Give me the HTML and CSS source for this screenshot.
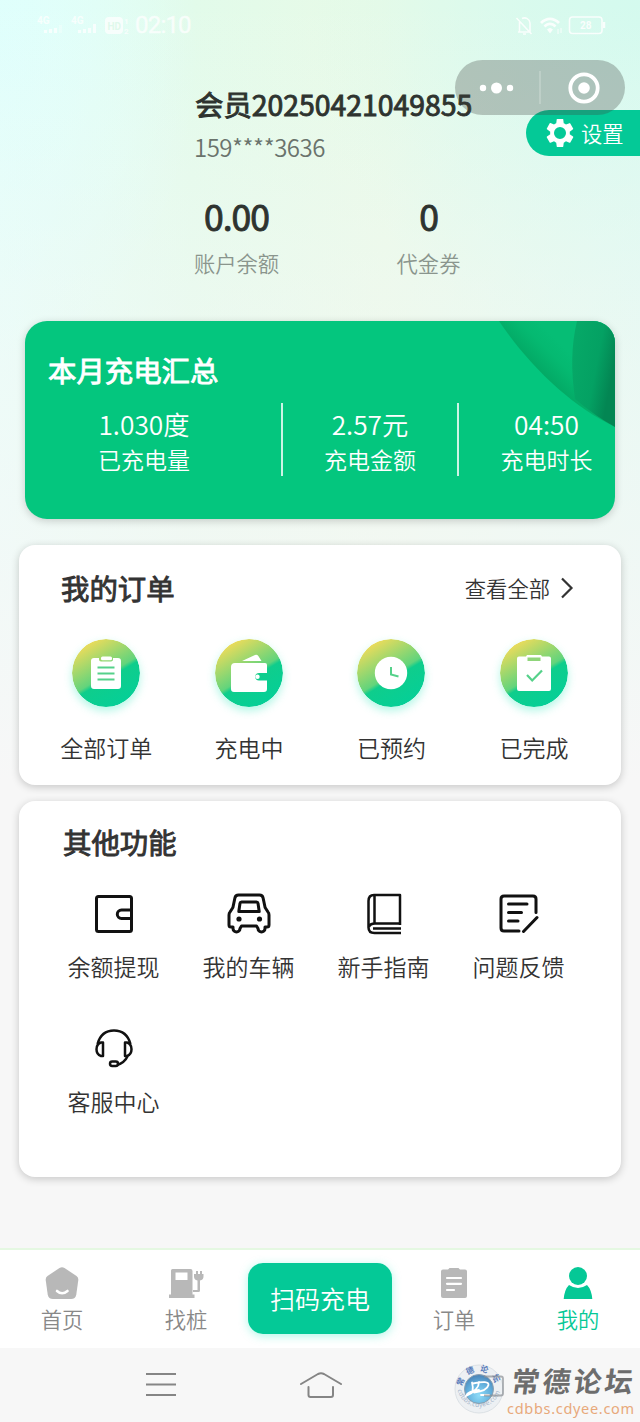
FILE: index.html
```html
<!DOCTYPE html>
<html lang="zh-CN">
<head>
<meta charset="utf-8">
<title>我的</title>
<link rel="stylesheet" href="styles.css">
</head>
<body>
<svg class="defs" width="0" height="0">
  <defs>
    <linearGradient id="ball" x1="0.15" y1="0.08" x2="0.68" y2="0.98">
      <stop offset="0" stop-color="#f3dc59"/>
      <stop offset="0.54" stop-color="#62d47c"/>
      <stop offset="0.6" stop-color="#0fcd8c"/>
      <stop offset="1" stop-color="#05cf97"/>
    </linearGradient>
  </defs>
</svg>
<div class="phone">
  <header class="status">
    <svg class="signals" width="93" height="24" viewBox="0 0 93 24">
      <text class="net" x="0" y="11">4G</text><path d="M7 20v-3h3v3zm5 0v-4h3v4zm5 0v-5h3v5z"/><path d="M22 20v-8h3v8z" opacity=".4"/>
      <text class="net" x="34" y="11">4G</text><path d="M41 20v-3h3v3zm5 0v-4h3v4zm5 0v-5h3v5zm5 0V11h3v9z"/>
      <rect x="68" y="4" width="18" height="17" rx="4"/><text class="hd" x="70.5" y="17">HD</text>
      <text class="sim" x="87" y="11">1</text><text class="sim" x="87" y="21">2</text>
    </svg>
    <span class="clock">02:10</span>
    <svg class="sysicons" width="92" height="24" viewBox="0 0 92 24" fill="none" stroke="#fff" stroke-width="1.6">
      <path d="M3 19h12V10a5.5 5.5 0 0 0-8-4.500M4.500 9v10M1.500 5l15 16M8 21h3"/>
      <g fill="#fff" stroke="none"><path d="M25 9c6-6 14-6 20 0l-2 2c-5-5-11-5-16 0zM28.500 12.500c4-4 9-4 13 0l-2 2c-3-3-6-3-9 0zM32 16.500c2-2 4-2 6 0l-3 4z"/></g>
      <path d="M43 16v5M46 15v5" stroke-width="1"/>
      <rect x="54.500" y="4" width="32.500" height="16.500" rx="3"/><path d="M89 9v6" stroke-width="2.500"/>
      <text class="batt" x="65" y="16">28</text>
    </svg>
  </header>

  <section class="profile">
    <div class="name">会员20250421049855</div>
    <div class="tel">159****3636</div>
    <div class="assets">
      <div class="asset"><b>0.00</b><span>账户余额</span></div>
      <div class="asset"><b>0</b><span>代金券</span></div>
    </div>
  </section>
  <a class="settings">
    <svg width="28" height="28" viewBox="1.300 1.300 21.400 21.400" fill="#fff"><path d="M19.430 12.980c.04-.32.07-.64.07-.98s-.03-.66-.07-.98l2.500-1.800a.7.700 0 0 0 .12-.64l-2.200-3.900a.6.600 0 0 0-.61-.22l-2.700 1.100a7.300 7.300 0 0 0-1.690-.98l-.38-3A.6.600 0 0 0 14 1.100h-4a.6.600 0 0 0-.49.420l-.38 3c-.61.25-1.170.59-1.690.98l-2.700-1.100a.6.600 0 0 0-.61.220l-2.200 3.900a.6.600 0 0 0 .12.640l2.500 1.800c-.04.32-.07.65-.07.980s.03.660.07.980l-2.500 1.800a.6.600 0 0 0-.12.640l2.200 3.900c.12.220.39.300.61.220l2.700-1.100c.52.400 1.080.73 1.690.98l.38 3c.03.240.24.420.49.420h4c.25 0 .46-.18.490-.42l.38-3a7 7 0 0 0 1.690-.98l2.700 1.100c.23.090.49 0 .61-.22l2.200-3.900a.6.600 0 0 0-.12-.64zM12 16.600a4.600 4.600 0 1 1 0-9.200 4.600 4.600 0 0 1 0 9.200z"/></svg>
    <span>设置</span>
  </a>
  <div class="capsule">
    <svg width="170" height="55" viewBox="0 0 170 55" fill="#fff">
      <circle cx="28" cy="28" r="3.200"/><circle cx="41.500" cy="28" r="5.500"/><circle cx="55" cy="28" r="3.200"/>
      <path d="M84.500 11h1v33h-1z" opacity=".4"/>
      <circle cx="129" cy="28" r="13.700" fill="none" stroke="#fff" stroke-width="3.800"/><circle cx="129" cy="28" r="5.800"/>
    </svg>
  </div>

  <section class="summary">
    <svg class="leaf" width="116" height="106" viewBox="0 0 116 106">
      <defs>
        <linearGradient id="l1" gradientUnits="userSpaceOnUse" x1="38" y1="50" x2="64" y2="24"><stop offset="0" stop-color="#03a864"/><stop offset=".6" stop-color="#05b971"/><stop offset="1" stop-color="#06bd75"/></linearGradient>
        <linearGradient id="l2" gradientUnits="userSpaceOnUse" x1="74" y1="30" x2="116" y2="38"><stop offset="0" stop-color="#06a867"/><stop offset=".6" stop-color="#04a163"/><stop offset="1" stop-color="#038653"/></linearGradient>
      </defs>
      <path d="M0 0C30 45 73 86 116 106V0z" fill="url(#l1)"/>
      <path d="M78 0C72 25 72 50 76 78Q96 95 116 106V0z" fill="url(#l2)"/>
    </svg>
    <h2>本月充电汇总</h2>
    <div class="stats">
      <div class="stat"><span class="num">1.030度</span><span>已充电量</span></div>
      <div class="stat"><span class="num">2.57元</span><span>充电金额</span></div>
      <div class="stat"><span class="num">04:50</span><span>充电时长</span></div>
    </div>
  </section>

  <section class="card orders">
    <div class="head"><h2>我的订单</h2>
      <a class="more">查看全部<svg width="14" height="22" viewBox="0 0 14 22" fill="none" stroke="#333" stroke-width="2.200"><path d="M2 1.500l9.500 9.500L2 20.500"/></svg></a>
    </div>
    <div class="row4">
      <div class="order"><svg class="ball" width="68" height="68" viewBox="0 0 68 68"><circle cx="34" cy="34" r="34" fill="url(#ball)"/><path d="M22 19h5v1.500a2 2 0 0 0 2 2h10a2 2 0 0 0 2-2V19h5q3 0 3 3v25q0 3-3 3H22q-3 0-3-3V22q0-3 3-3z" fill="#fff"/><rect x="29" y="17.500" width="11" height="3.800" rx="1.500" fill="#fff"/><path d="M25.500 28.500h17M25.500 34.500h17M25.500 40.500h17" stroke="#55d18a" stroke-width="2"/></svg><span>全部订单</span></div>
      <div class="order"><svg class="ball" width="68" height="68" viewBox="0 0 68 68"><circle cx="34" cy="34" r="34" fill="url(#ball)"/><path d="M27 22l13-6q2-.8 3.500 1.200l3 4.800zM20 24h30q2 0 2 2v8h-8a3.500 3.500 0 0 0 0 7.500h8V50q0 3-3 3H19q-3 0-3-3V28q0-4 4-4z" fill="#fff"/><circle cx="42.500" cy="37.800" r="2.200" fill="#fff"/></svg><span>充电中</span></div>
      <div class="order"><svg class="ball" width="68" height="68" viewBox="0 0 68 68"><circle cx="34" cy="34" r="34" fill="url(#ball)"/><circle cx="34" cy="34" r="16.200" fill="#fff"/><path d="M34 28v7.500l7.500 2" fill="none" stroke="#55d18a" stroke-width="2"/></svg><span>已预约</span></div>
      <div class="order"><svg class="ball" width="68" height="68" viewBox="0 0 68 68"><circle cx="34" cy="34" r="34" fill="url(#ball)"/><path d="M19 17.500h7l1-1.500h14l1 1.500h7q2 0 2 2V50q0 2-2 2H19q-2 0-2-2V19.500q0-2 2-2z" fill="#fff"/><path d="M27.500 18.500h13V22h-13z" fill="#8fd57a"/><path d="M27 36l5.200 5.500L42 31.500" fill="none" stroke="#55d18a" stroke-width="2.200"/></svg><span>已完成</span></div>
    </div>
  </section>

  <section class="card tools">
    <h2>其他功能</h2>
    <div class="grid">
      <div class="tool"><svg width="44" height="44" viewBox="0 0 44 44"><path d="M6.500 4.500h31q2 0 2 2v31q0 2-2 2h-31q-2 0-2-2v-31q0-2 2-2zM39 18H29.500a4.200 4.200 0 0 0 0 8.400H39"/></svg><span>余额提现</span></div>
      <div class="tool"><svg width="44" height="44" viewBox="0 0 44 44"><path d="M11.500 3h21q3 0 3.600 3l2 9.500 2.900 4.500q1 1 1 3v10q0 2-2 2h-2v1.500a3.500 3.500 0 0 1-7 0L29.500 34h-15L13 36.500a3.500 3.500 0 0 1-7 0V35H4q-2 0-2-2V23q0-2 1-3l2.900-4.500L7.900 6q.6-3 3.600-3z"/><path d="M14.500 10h15q1.300 0 1.500 1.300l1.200 8.200H11.800L13 11.300q.2-1.300 1.500-1.300z"/><circle class="dot" cx="12" cy="27" r="2.600"/><circle class="dot" cx="32.500" cy="27" r="2.600"/></svg><span>我的车辆</span></div>
      <div class="tool"><svg class="thin" width="44" height="44" viewBox="0 0 44 44"><path d="M38 33V3H12Q6.500 3 6.500 9v26.500q0 5.500 6 5.500H39M7 35q1-3.500 6-3.500h25M11 36.500h28M12.500 3v28"/></svg><span>新手指南</span></div>
      <div class="tool"><svg width="44" height="44" viewBox="0 0 44 44" stroke-linecap="round"><path d="M39 20.500V7q0-3-3-3H7Q4 4 4 7v29q0 3 3 3h15M11.500 12H30M11.500 20.500h13M11.500 29H21M26.500 39.500L40 25.500"/></svg><span>问题反馈</span></div>
      <div class="tool"><svg class="thin" width="44" height="44" viewBox="0 0 44 44"><path d="M5.500 17C8 8 14 3.500 22 3.500S36 8 38.500 17M11 15.500v13.500h-2c-6-2-6-11.500 0-13.500zM33 15.500v13.500h2c6-2 6-11.500 0-13.500zM36 28.500q-3.500 7.500-11 9.500"/><rect x="18" y="34.500" width="8" height="4.500" rx="2.200"/></svg><span>客服中心</span></div>
    </div>
  </section>

  <nav class="tabs">
    <a class="tab"><svg width="36" height="36" viewBox="0 0 36 36" fill="#b8b8b8"><path d="M15.500 2q2.500-1.500 5 0l12 8q2 1.500 1.800 4l-2 14.500Q31.500 33 27 33H9Q4.500 33 3.700 28.500L1.700 14Q1.500 11.500 3.500 10z"/><path d="M13 25q5 4.500 10.500 0" fill="none" stroke="#fff" stroke-width="2.600" stroke-linecap="round"/></svg><span>首页</span></a>
    <a class="tab"><svg width="36" height="36" viewBox="0 0 36 36" fill="#b8b8b8"><path fill-rule="evenodd" d="M4.500 3h18q2 0 2 2v23.500h2V32H1v-3.500h2V4.500Q3 3 4.500 3zM7.500 6.500V14h12V6.500z"/><path d="M26 8h2V5h2v3h2V5h2v3h1.500v2.500q0 3.500-3.500 4v10q0 1.500-1.500 1.500H25v-2h4.500V14.500q-3.500-.5-3.500-4z"/></svg><span>找桩</span></a>
    <a class="scan">扫码充电</a>
    <a class="tab"><svg width="36" height="36" viewBox="0 0 36 36" fill="#b8b8b8"><path d="M7 3.500h5L13.500 2h9L24 3.500h5q2 0 2 2V30q0 2-2 2H7q-2 0-2-2V5.500q0-2 2-2z"/><path d="M11 12h14M11 17.800h14M11 24h7" stroke="#fff" stroke-width="2.200" stroke-linecap="round"/></svg><span>订单</span></a>
    <a class="tab on"><svg width="36" height="36" viewBox="0 0 36 36" fill="#05c896"><circle cx="18" cy="10" r="9"/><path d="M9 19q9 6 18 0 4.500 4.500 5.300 14H3.700Q4.500 23.500 9 19z"/></svg><span>我的</span></a>
  </nav>

  <footer class="sysnav">
    <svg width="30" height="24" viewBox="0 0 30 24" stroke="#858585" stroke-width="2"><path d="M0 1h30M0 11.500h30M0 22h30"/></svg>
    <svg width="42" height="28" viewBox="0 0 42 28" fill="none" stroke="#858585" stroke-width="2" stroke-linecap="round" stroke-linejoin="round"><path d="M1 13L18 3q3-1.500 6 0L41 13M8.500 16v8q0 2 2 2h20.500q2 0 2-2v-8"/></svg>
  </footer>

  <div class="mark">
    <svg width="50" height="52" viewBox="0 0 50 52">
      <defs>
        <radialGradient id="orb" cx=".5" cy=".72" r=".7"><stop offset="0" stop-color="#8fdcf8"/><stop offset=".6" stop-color="#62afdc"/><stop offset="1" stop-color="#4a84b8"/></radialGradient>
        <path id="arcTop" d="M8.500 25A16.500 16.500 0 0 1 41.500 25"/>
        <path id="arcBottom" d="M3 22A22 22 0 0 0 47 22"/>
      </defs>
      <circle cx="25" cy="26" r="24" fill="#edf0f3" stroke="#dce1e5"/>
      <text class="arc"><textPath href="#arcTop" startOffset="1">常德论坛</textPath></text>
      <text class="arc url"><textPath href="#arcBottom" startOffset="5">cdbbs.cdyee.com</textPath></text>
      <circle cx="25" cy="26" r="14.500" fill="url(#orb)" stroke="#8a9fb0"/>
      <path d="M18 19.500q1.500 5 .5 9.500M19 20.500q16-3.500 15.500 1.500Q33 28 20 29.500M25 19q0 8-13 14 2-5 13-6M27 32h8" fill="none" stroke="#fff" stroke-width="1.800" stroke-linecap="round"/>
      <path d="M30 13.500h17q2 0 2 2v15q0 2-2 2H30" fill="none" stroke="#8a8f94" stroke-width="1.800" opacity=".7"/>
    </svg>
    <div class="marktext"><b>常德论坛</b><span>cdbbs.cdyee.com</span></div>
  </div>
</div>
</body>
</html>
```

FILE: styles.css
```css
* { box-sizing: border-box; margin: 0; padding: 0; }
body {
  width: 640px;
  font-family: "Noto Sans CJK SC", "Noto Sans", sans-serif;
  font-weight: 350;
  color: #333;
}
.defs { position: absolute; }
.phone {
  position: relative;
  width: 640px;
  height: 1422px;
  overflow: hidden;
  display: flex;
  flex-direction: column;
  background:
    linear-gradient(180deg, rgba(247,247,247,0) 0, rgba(247,247,247,.4) 300px, rgba(247,247,247,.65) 520px, #f7f7f7 780px),
    radial-gradient(ellipse 200px 320px at 0 40px, #dffffc 0, rgba(223,255,252,0) 100%),
    radial-gradient(ellipse 330px 340px at 640px 20px, #d4faee 0, rgba(212,250,238,0) 100%),
    linear-gradient(90deg, #e4fff8 0, #e2fbea 30%, #e8fae7 60%, #defaf0 100%);
}
h2, .name, .asset b { font-weight: 400; -webkit-text-stroke: .9px currentColor; }
h2 { font-size: 28.4px; line-height: 40px; }

.status { display: flex; align-items: center; height: 48px; padding: 2px 33px 0 37px; }
.signals { fill: #fff; opacity: .75; }
.net { font: bold 10px Roboto, sans-serif; }
.hd { font: bold 10px Roboto, sans-serif; fill: #dff8e9; }
.sim { font: bold 8px Roboto, sans-serif; }
.clock { margin-left: 5px; font: 24px/24px Roboto, sans-serif; color: #fff; opacity: .75; -webkit-text-stroke: .4px #fff; letter-spacing: -.8px; }
.sysicons { margin-left: auto; opacity: .85; }
.batt { font: bold 10px Roboto, sans-serif; fill: #fff; stroke: none; }

.profile { height: 273px; padding: 36px 0 0 195px; }
.name { font-size: 28.4px; line-height: 40px; white-space: nowrap; color: #2e332f; }
.tel { font-size: 24px; line-height: 34px; margin-top: 6px; color: #6a736c; letter-spacing: -.5px; margin-left: -1px; }
.assets { display: flex; margin: 27px 0 0 -1px; }
.asset { display: flex; flex-direction: column; align-items: center; width: 85px; }
.asset + .asset { margin-left: 107px; }
.asset b { font-size: 35.500px; line-height: 50px; color: #2e332f; letter-spacing: -1px; }
.asset span { font-size: 21.300px; line-height: 30px; margin-top: 7px; color: #8a958d; white-space: nowrap; }

.settings {
  position: absolute; right: 0; top: 110px; width: 114px; height: 46px;
  display: flex; align-items: center; gap: 7px; padding: 0 0 1px 20px;
  border-radius: 23px 0 0 23px; background: #04c997; color: #fff; font-size: 21.300px;
}
.capsule { position: absolute; left: 455px; top: 60px; width: 170px; height: 55px; border-radius: 28px; background: rgba(65,70,65,.3); }
.capsule svg { display: block; }

.summary {
  position: relative; flex: none; height: 198px; margin: 0 25px; padding: 29px 0 0 23px;
  border-radius: 22px; overflow: hidden; background: #04c67e; color: #fff;
  box-shadow: 0 2px 8px rgba(0,0,0,.18);
}
.leaf { position: absolute; right: 0; top: 0; }
.summary h2 { position: relative; }
.stats { display: grid; grid-template-columns: 258px 176px 156px; margin: 13px 0 0 -23px; }
.stat { height: 73px; display: flex; flex-direction: column; align-items: center; border-right: 2px solid rgba(255,255,255,.8); font-size: 23px; line-height: 34px; white-space: nowrap; }
.stat .num { font-size: 26.300px; line-height: 38px; margin: 2px 0 -1px; }
.stat:first-child { padding-right: 18px; }
.stat:last-child { padding-left: 19px; border: 0; }

.card { flex: none; margin: 0 19px; border-radius: 16px; background: #fff; box-shadow: 0 2px 8px rgba(0,0,0,.2); }
.orders { height: 240px; margin-top: 26px; padding: 23px 15px 0 16px; }
.head { display: flex; align-items: center; justify-content: space-between; padding: 0 32px 0 26px; }
.more { display: flex; align-items: center; gap: 10px; font-size: 21.300px; line-height: 40px; }
.row4 { display: grid; grid-template-columns: repeat(4, 142.600px); margin-top: 31px; }
.order { display: flex; flex-direction: column; align-items: center; font-size: 23px; line-height: 34px; }
.order span { margin-top: 23px; }
.ball { border-radius: 50%; box-shadow: 0 4px 9px rgba(70,235,195,.4); }

.tools { height: 376px; margin-top: 16px; padding: 21px 27px 0; }
.tools h2 { padding-left: 17px; }
.grid { display: grid; grid-template-columns: repeat(4, 135px); row-gap: 39px; margin-top: 30px; }
.tool { display: flex; flex-direction: column; align-items: center; height: 96px; font-size: 23px; line-height: 34px; }
.tool svg { fill: none; stroke: #111; stroke-width: 3; stroke-linejoin: round; }
.tool svg.thin { stroke-width: 2.500; }
.tool .dot { fill: #111; stroke: none; }
.tool span { margin-top: 13px; }

.tabs { display: flex; margin-top: auto; height: 100px; flex: none; background: #fff; border-top: 2px solid #e5f8e2; }
.tab { width: 124px; padding-top: 16px; display: flex; flex-direction: column; align-items: center; font-size: 21.300px; line-height: 30px; color: #888; }
.tab span { margin-top: 2px; }
.tab.on { color: #05c896; }
.scan { width: 144px; height: 71px; margin: 13px 0 0; border-radius: 15px; background: #04c997; color: #fff; font-size: 25px; line-height: 71px; text-align: center; box-shadow: 0 2px 10px rgba(30,230,190,.35); }
.sysnav { flex: none; height: 74px; background: #f7f7f7; display: flex; align-items: center; padding-left: 146px; }
.sysnav svg:nth-child(2) { margin-left: 124px; }

.mark { position: absolute; left: 454px; top: 1363px; display: flex; }
.arc { font-size: 8px; font-weight: 700; fill: #5679b8; letter-spacing: 4.500px; }
.arc.url { font: 6.500px "Noto Sans", sans-serif; fill: #a5b5ca; letter-spacing: .3px; }
.marktext { margin: -1px 0 0 8px; white-space: nowrap; }
.marktext b { display: block; font-size: 28px; line-height: 36px; font-weight: 700; letter-spacing: 3px; color: #6d6d6d; transform: skewX(-7deg); }
.marktext span { display: block; margin: 1px 0 0 -5px; font: 14.500px/18px "Noto Sans", sans-serif; letter-spacing: .7px; color: #e8a97b; }
```
